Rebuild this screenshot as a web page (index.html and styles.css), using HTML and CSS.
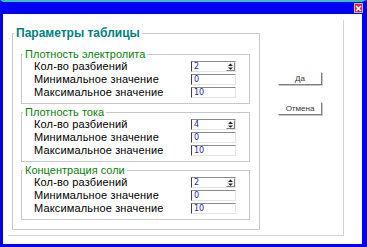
FILE: index.html
```html
<!DOCTYPE html>
<html lang="ru">
<head>
    <meta charset="UTF-8">
    <meta name="viewport" content="width=device-width, initial-scale=1.0">
    <title>Параметры таблицы</title>
    <link rel="stylesheet" href="styles.css">
</head>
<body>

<div class="window">
    <div class="titlebar">
        <span class="close">
            <svg width="7" height="7" viewBox="0 0 7 7"><path d="M1 1 L6 6 M6 1 L1 6" stroke="#fff" stroke-width="1.6"/></svg>
        </span>
    </div>
    <div class="client">
        <div class="panel">
            <div class="frame">
                <div class="frame-title">Параметры таблицы</div>

                <div class="group">
                    <div class="group-title">Плотность электролита</div>
                    <div class="row"><span>Кол-во разбиений</span><span class="field">2<i class="spinner"><svg width="7" height="7" viewBox="0 0 7 7"><path d="M3.5 0.5 L6 3 H1 Z M1 4.5 H6 L3.5 6.8 Z" fill="#222"/></svg></i></span></div>
                    <div class="row"><span>Минимальное значение</span><span class="field">0</span></div>
                    <div class="row"><span>Максимальное значение</span><span class="field">10</span></div>
                </div>

                <div class="group">
                    <div class="group-title">Плотность тока</div>
                    <div class="row"><span>Кол-во разбиений</span><span class="field">4<i class="spinner"><svg width="7" height="7" viewBox="0 0 7 7"><path d="M3.5 0.5 L6 3 H1 Z M1 4.5 H6 L3.5 6.8 Z" fill="#222"/></svg></i></span></div>
                    <div class="row"><span>Минимальное значение</span><span class="field">0</span></div>
                    <div class="row"><span>Максимальное значение</span><span class="field">10</span></div>
                </div>

                <div class="group">
                    <div class="group-title">Концентрация соли</div>
                    <div class="row"><span>Кол-во разбиений</span><span class="field">2<i class="spinner"><svg width="7" height="7" viewBox="0 0 7 7"><path d="M3.5 0.5 L6 3 H1 Z M1 4.5 H6 L3.5 6.8 Z" fill="#222"/></svg></i></span></div>
                    <div class="row"><span>Минимальное значение</span><span class="field">0</span></div>
                    <div class="row"><span>Максимальное значение</span><span class="field">10</span></div>
                </div>
            </div>

            <div class="buttons">
                <button class="btn">Да</button>
                <button class="btn btn-cancel">Отмена</button>
            </div>
        </div>
    </div>
</div>

</body>
</html>
```

FILE: styles.css
```css
body {
    margin: 0;
    background-color: #ffffff;
    font-family: "Liberation Sans", Arial, sans-serif;
}
.window {
    width: 367px;
    height: 247px;
    box-sizing: border-box;
    border-top: 2px solid #3cbcbc; /* teal strip */
    border-left: 3px solid #0000f4;
    border-right: 5px solid #0000f4;
    border-bottom: 3px solid #0000f4;
    display: flex;
    flex-direction: column;
    background-color: #ffffff;
}
.titlebar {
    height: 12px;
    margin: 0 -5px 0 -3px;
    padding-right: 4px;
    background-color: #0000f4;
    display: flex;
    justify-content: flex-end;
    align-items: center;
}
.close {
    width: 9px;
    height: 10px;
    box-sizing: border-box;
    border: 1px solid #b8b8c8;
    background-color: #e42222;
    display: flex;
    align-items: center;
    justify-content: center;
}
.client {
    flex: 1;
    display: flex;
}
.panel {
    flex: 1;
    margin: 6px 18px 8px 5px;
    padding: 13px 0 0 4px;
    border-right: 1px solid #d4d4d4;
    border-bottom: 1px solid #d4d4d4;
    display: flex;
    align-items: flex-start;
}
.frame {
    width: 248px;
    box-sizing: border-box;
    border: 1px solid #c8c8c8;
    padding: 0 9px 9px 8px;
}
.frame-title {
    width: fit-content;
    margin: -8px 0 0 -7px;
    padding: 0 2px;
    line-height: 14px;
    font-size: 12px;
    font-weight: bold;
    color: #007f7f; /* teal heading */
    background-color: #ffffff;
}
.group {
    margin-top: 8px;
    border: 1px solid #c8c8c8;
    padding: 0 13px 4px 12px;
}
.frame-title + .group {
    margin-top: 14px;
}
.group-title {
    width: fit-content;
    margin: -7px 0 0 -11px;
    padding: 0 2px;
    line-height: 12px;
    font-size: 11px;
    color: #0b800b; /* green heading */
    background-color: #ffffff;
}
.row {
    height: 13px;
    display: flex;
    justify-content: space-between;
    align-items: center;
    font-size: 11px;
    line-height: 13px;
    color: #000000;
    letter-spacing: 0.15px;
}
.field {
    width: 45px;
    height: 11px;
    box-sizing: border-box;
    border-top: 1px solid #8a8a8a;
    border-left: 1px solid #404040;
    border-right: 1px solid #e4e4e4;
    border-bottom: 1px solid #e4e4e4;
    padding-left: 2px;
    display: flex;
    align-items: center;
    font-family: "DejaVu Sans", sans-serif;
    font-size: 8px;
    line-height: 9px;
    letter-spacing: 0;
    color: #2626a6;
    background-color: #ffffff;
}
.spinner {
    margin-left: auto;
    width: 9px;
    height: 9px;
    box-sizing: border-box;
    border: 1px solid;
    border-color: #ffffff #808080 #808080 #ffffff;
    background-color: #f4f4f4;
    display: flex;
    align-items: center;
    justify-content: center;
}
.buttons {
    padding: 39px 0 0 18px;
    display: flex;
    flex-direction: column;
    align-items: flex-start;
}
.btn {
    width: 44px;
    height: 13px;
    padding: 0;
    box-sizing: border-box;
    border: 1px solid;
    border-color: #ffffff #808080 #808080 #ffffff;
    box-shadow: 1px 1px 0 #c4c4c4;
    background-color: #ffffff;
    font-family: "Liberation Sans", Arial, sans-serif;
    font-size: 8px;
    line-height: 11px;
    color: #333333;
}
.btn-cancel {
    margin-top: 17px;
}
```
